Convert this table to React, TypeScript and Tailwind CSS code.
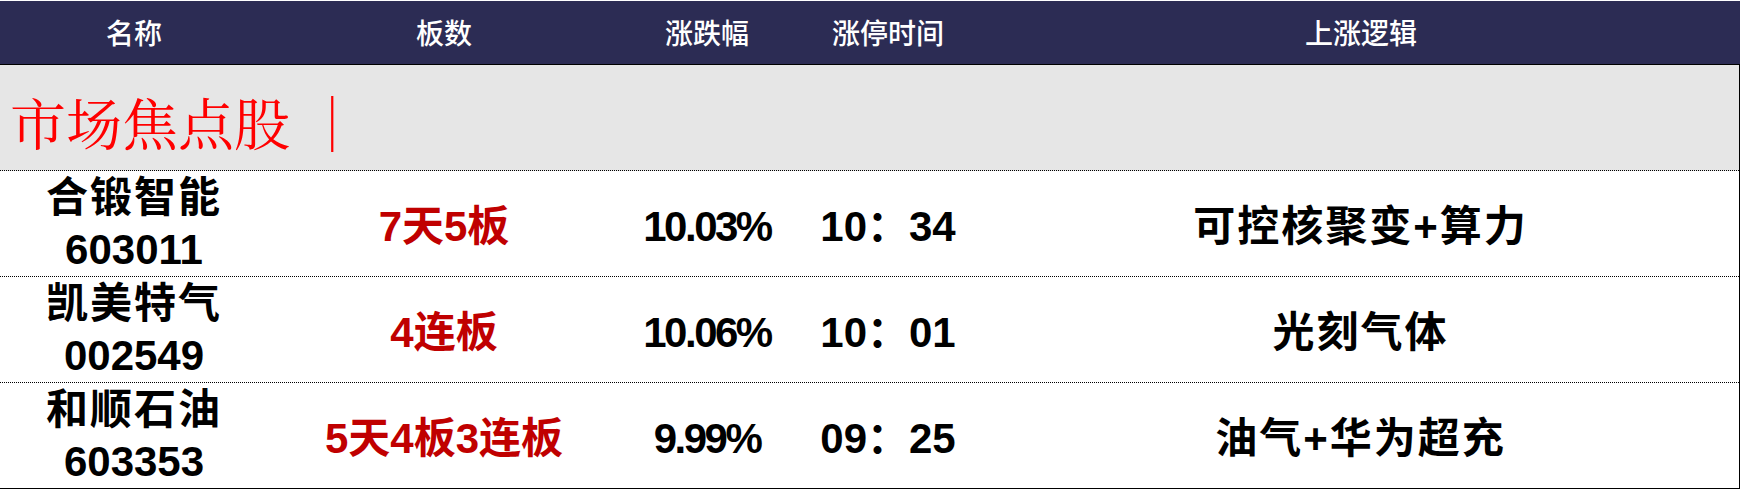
import React from 'react';

interface StockRow {
  name: string;
  code: string;
  boards: string;
  change: string;
  time: string;
  logic: string;
}

const rows: StockRow[] = [
  { name: '合锻智能', code: '603011', boards: '7天5板', change: '10.03%', time: '10：34', logic: '可控核聚变+算力' },
  { name: '凯美特气', code: '002549', boards: '4连板', change: '10.06%', time: '10：01', logic: '光刻气体' },
  { name: '和顺石油', code: '603353', boards: '5天4板3连板', change: '9.99%', time: '09：25', logic: '油气+华为超充' },
];

const headers = ['名称', '板数', '涨跌幅', '涨停时间', '上涨逻辑'];

const cols = 'grid grid-cols-[268px_352px_174px_188px_1fr]';

export default function App() {
  return (
    <div className="w-[1740px] h-[490px] bg-white pt-px font-['Liberation_Sans','Noto_Sans_CJK_SC',sans-serif]">
      {/* header bar */}
      <div className={`${cols} h-[63px] bg-[#2c2c54] text-white text-[28px] font-medium`}>
        {headers.map((h) => (
          <div key={h} className="flex items-center justify-center pt-[4px]">
            {h}
          </div>
        ))}
      </div>

      <div className="border-t border-r border-black">
        {/* section title */}
        <div className="h-[106px] bg-[#e6e6e6] border-b border-dotted border-black flex items-center pl-[10px] pt-[6px]">
          <span className="text-[56px] leading-none text-[#ff0000] font-normal font-['Noto_Serif_CJK_SC','Noto_Sans_CJK_SC',serif]">
            市场焦点股 ｜
          </span>
        </div>

        {rows.map((r, i) => (
          <div
            key={r.code}
            className={`${cols} h-[106px] border-b border-black ${i < rows.length - 1 ? 'border-dotted' : 'border-solid'} text-[42px] font-bold text-black`}
          >
            <div className="flex flex-col items-center justify-center leading-[52px]">
              <span className="tracking-[2px]">{r.name}</span>
              <span>{r.code}</span>
            </div>
            <div className="flex items-center justify-center pt-[6px] text-[#c00000]">{r.boards}</div>
            <div className="flex items-center justify-center pt-[6px] tracking-[-2.5px]">{r.change}</div>
            <div className="flex items-center justify-center pt-[6px]">{r.time}</div>
            <div className="flex items-center justify-center pt-[6px] tracking-[2px]">{r.logic}</div>
          </div>
        ))}
      </div>
    </div>
  );
}
